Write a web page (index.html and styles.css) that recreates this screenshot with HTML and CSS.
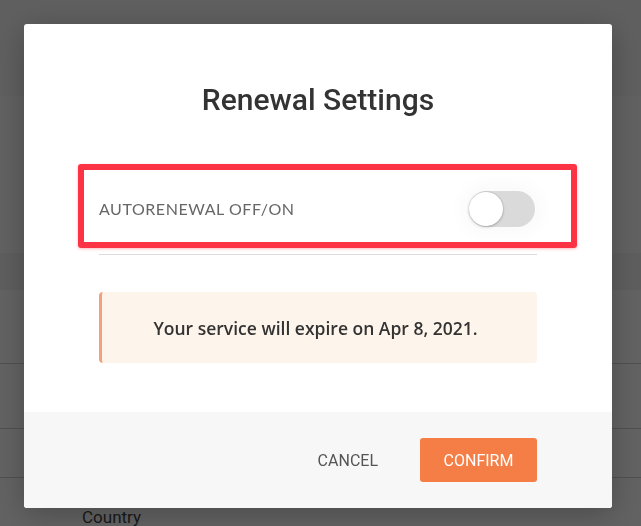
FILE: index.html
```html
<!DOCTYPE html>
<html lang="en">
<head>
<meta charset="utf-8">
<title>Renewal Settings</title>
<link rel="stylesheet" href="styles.css">
</head>
<body>
<div class="page">
  <div class="page-header"></div>
  <div class="page-gap"></div>
  <div class="page-band"></div>
  <div class="page-row r1"></div>
  <div class="page-row r2"></div>
  <div class="page-row r3"></div>
  <div class="page-label">Country</div>
</div>

<div class="overlay">
  <div class="modal">
    <div class="modal-body">
      <h2 class="modal-title">Renewal Settings</h2>
      <div class="setting-row">
        <span class="setting-label">AUTORENEWAL OFF/ON</span>
        <span class="toggle"><span class="toggle-thumb"></span></span>
        <span class="highlight"></span>
      </div>
      <div class="notice">Your service will expire on Apr 8, 2021.</div>
    </div>
    <div class="modal-footer">
      <button class="btn btn-cancel">CANCEL</button>
      <button class="btn btn-confirm">CONFIRM</button>
    </div>
  </div>
</div>
</body>
</html>
```

FILE: styles.css
```css
* { box-sizing: border-box; }
html, body { margin: 0; padding: 0; }
body {
  width: 641px;
  height: 526px;
  overflow: hidden;
  background: #ffffff;
  font-family: "Roboto", "Liberation Sans", sans-serif;
}

/* background page behind overlay */
.page { width: 641px; }
.page-header { height: 96px; background: #f6f6f6; }
.page-gap { height: 157px; background: #fdfdfd; }
.page-band { height: 37px; background: #f3f3f3; }
.page-row { border-bottom: 1px solid #cfcfcf; }
.page-row.r1 { height: 74px; }
.page-row.r2 { height: 65px; }
.page-row.r3 { height: 49px; }
.page-label {
  padding: 29px 0 0 82px;
  font-family: "Roboto", sans-serif;
  font-size: 17px;
  line-height: 20px;
  color: #444;
}

.overlay {
  position: fixed;
  inset: 0;
  background: rgba(0, 0, 0, 0.615);
  padding: 24px;
}

.modal {
  width: 588px;
  height: 484px;
  background: #ffffff;
  border-radius: 3px;
  box-shadow: 0 6px 30px rgba(0, 0, 0, 0.25);
  overflow: hidden;
  display: flex;
  flex-direction: column;
}

.modal-body {
  flex: 1;
  padding: 58px 75px 0;
}

.modal-title {
  margin: 0;
  text-align: center;
  font-family: "Roboto", sans-serif;
  font-weight: 500;
  font-size: 30px;
  line-height: 36px;
  color: #333333;
}

.setting-row {
  position: relative;
  margin-top: 45px;
  height: 92px;
  border-bottom: 1px solid #dcdcdc;
  display: flex;
  align-items: center;
  justify-content: space-between;
}

.setting-label {
  font-family: "Lato", sans-serif;
  font-size: 16px;
  color: #666666;
  letter-spacing: 0.55px;
}

.toggle {
  position: relative;
  width: 66px;
  height: 36px;
  margin-right: 2px;
  border-radius: 18px;
  background: #dadada;
  box-shadow: 0 0 14px 10px rgba(0, 0, 0, 0.018);
}
.toggle-thumb {
  position: absolute;
  left: 0;
  top: 1px;
  width: 34px;
  height: 34px;
  border-radius: 50%;
  background: #ffffff;
  box-shadow: 0 0 0 1px rgba(0, 0, 0, 0.05), 0 1px 3px rgba(0, 0, 0, 0.22);
}

/* annotation highlight box */
.highlight {
  position: absolute;
  left: -21px;
  top: 1px;
  width: 499px;
  height: 84px;
  border: 6px solid #fc3345;
  border-radius: 3px;
  box-shadow: 0 1px 3px rgba(252, 51, 69, 0.35);
  pointer-events: none;
}

.notice {
  margin-top: 37px;
  height: 71px;
  display: flex;
  align-items: center;
  justify-content: center;
  padding-right: 8px;
  background: #fdf4eb;
  border-left: 3px solid #f5a07c;
  border-radius: 4px;
  font-family: "Open Sans", sans-serif;
  font-weight: 600;
  font-size: 17.5px;
  color: #333333;
}

.modal-footer {
  height: 96px;
  background: #f7f7f7;
  display: flex;
  justify-content: flex-end;
  align-items: flex-start;
  padding: 26px 75px 0;
  gap: 22px;
}

.btn {
  font-family: "Roboto", sans-serif;
  font-size: 16px;
  height: 44px;
  border: none;
  border-radius: 3px;
  cursor: pointer;
}
.btn-cancel {
  background: transparent;
  color: #555555;
  padding: 0 20px;
}
.btn-confirm {
  background: #f47e46;
  color: #ffffff;
  width: 117px;
}
```
